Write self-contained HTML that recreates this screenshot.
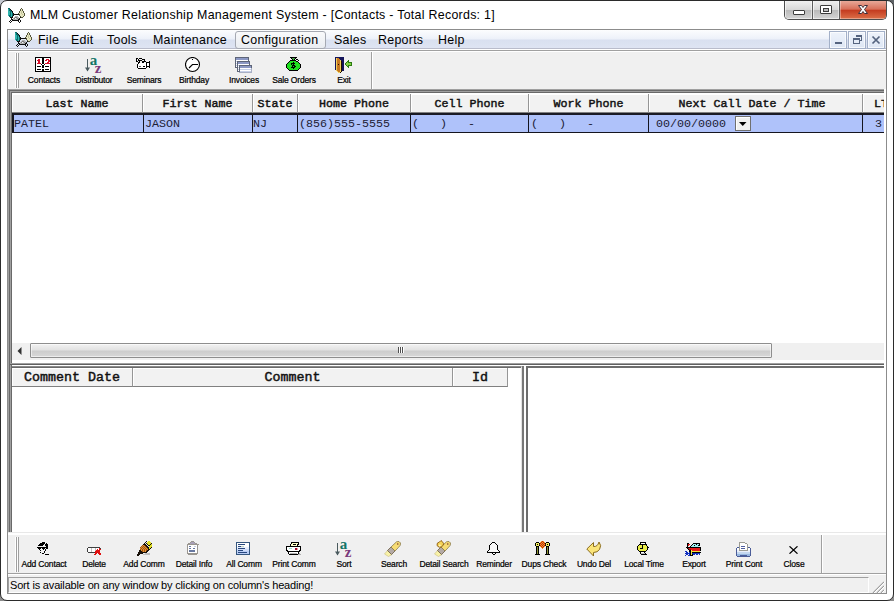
<!DOCTYPE html>
<html>
<head>
<meta charset="utf-8">
<title>MLM Customer Relationship Management System</title>
<style>
*{box-sizing:border-box;margin:0;padding:0}
html,body{width:894px;height:601px;overflow:hidden;background:#fff}
body{position:relative;font-family:"Liberation Sans",sans-serif;color:#000}
.abs{position:absolute}
#win{position:absolute;left:0;top:0;width:894px;height:601px;border:1px solid #2b2b2b;border-radius:7px;background:#fff}
#title{position:absolute;left:30px;top:7px;font-size:12.4px;letter-spacing:.28px;line-height:16px;white-space:nowrap;color:#000}
#client{position:absolute;left:7px;top:29px;width:880px;height:565px;border:1px solid #8c8c8c;background:#f0f0f0}
#menubar{position:absolute;left:8px;top:30px;width:878px;height:20px;background:linear-gradient(#fcfdfe 0%,#edf1f9 47%,#d9e0f0 53%,#dfe5f3 100%);border-bottom:1px solid #fff;box-shadow:inset 0 -1px 0 #b9bccb}
.mi{position:absolute;top:32px;height:17px;font-size:12.4px;letter-spacing:.28px;line-height:17px;white-space:nowrap}
#cfg{position:absolute;left:235px;top:31px;width:91px;height:18px;border:1px solid #a5a9b2;border-radius:3px;background:linear-gradient(#f9fafb,#e9ecf1)}
.mdi{position:absolute;top:31px;width:18px;height:18px;border:1px solid #a3b0c8;background:linear-gradient(#eef3fb,#dde6f4);box-shadow:inset 0 0 0 1px rgba(255,255,255,.7)}
.tb{position:absolute;left:8px;height:39px;background:#f0f0f0;border-right:1px solid #a0a0a0;box-shadow:1px 0 0 #fff}
.grip{position:absolute;width:4px;background:linear-gradient(90deg,#fff 0,#fff 1px,#a0a0a0 1px,#a0a0a0 2px,#fff 2px,#fff 3px,#a0a0a0 3px)}
.tbl{position:absolute;width:80px;text-align:center;font-size:8.5px;line-height:10px;white-space:nowrap;letter-spacing:-.15px;color:#000;-webkit-text-stroke:.22px #000}
.hd{position:absolute;height:19px;background:#f2f2f2;border-right:1px solid #969696;border-bottom:1px solid #808080;box-shadow:inset 1px 1px 0 #fff;font-family:"Liberation Mono",monospace;font-weight:normal;-webkit-text-stroke:.45px #111;font-size:11.667px;line-height:20px;text-align:center;white-space:pre;overflow:hidden;color:#111}
.cell{position:absolute;top:116px;height:17px;font-family:"Liberation Mono",monospace;font-size:11.667px;line-height:17px;white-space:pre;color:#1c2033}
.vs{position:absolute;top:114px;width:1px;height:19px;background:#15151f}
.sunk{position:absolute;background:#fff;border-left:2px solid #6d6d6d;border-top:2px solid #6d6d6d}
#status{position:absolute;left:8px;top:577px;width:861px;height:16px;border-top:1px solid #a0a0a0;border-left:1px solid #a0a0a0;border-bottom:1px solid #fff;border-right:1px solid #fff;font-size:11px;letter-spacing:-.17px;line-height:14px;padding-left:1px;white-space:nowrap;background:#f0f0f0}
</style>
</head>
<body>
<div class="abs" style="left:0;top:0;width:8px;height:8px;background:#c4c8d0"></div><div class="abs" style="right:0;top:0;width:8px;height:8px;background:#606468"></div><div class="abs" style="left:0;bottom:0;width:8px;height:8px;background:#8c8c8c"></div><div class="abs" style="right:0;bottom:0;width:8px;height:8px;background:#8c8c8c"></div>
<div id="win"></div>
<svg class="abs" style="left:8px;top:8px" width="18" height="15" viewBox="0 0 18 15" shape-rendering="crispEdges"><rect x="0" y="0" width="2" height="1" fill="#0a6a6a"/><rect x="13" y="0" width="1" height="1" fill="#55553c"/><rect x="0" y="1" width="1" height="1" fill="#30b4ae"/><rect x="1" y="1" width="1" height="1" fill="#0a6a6a"/><rect x="2" y="1" width="1" height="1" fill="#101010"/><rect x="12" y="1" width="1" height="1" fill="#55553c"/><rect x="13" y="1" width="1" height="1" fill="#e6e6c0"/><rect x="14" y="1" width="1" height="1" fill="#55553c"/><rect x="0" y="2" width="1" height="1" fill="#30b4ae"/><rect x="1" y="2" width="2" height="1" fill="#0a6a6a"/><rect x="3" y="2" width="1" height="1" fill="#101010"/><rect x="12" y="2" width="1" height="1" fill="#55553c"/><rect x="13" y="2" width="1" height="1" fill="#e6e6c0"/><rect x="14" y="2" width="1" height="1" fill="#55553c"/><rect x="0" y="3" width="2" height="1" fill="#30b4ae"/><rect x="2" y="3" width="2" height="1" fill="#0a6a6a"/><rect x="4" y="3" width="1" height="1" fill="#101010"/><rect x="11" y="3" width="1" height="1" fill="#55553c"/><rect x="12" y="3" width="1" height="1" fill="#e6e6c0"/><rect x="13" y="3" width="1" height="1" fill="#c4c49c"/><rect x="14" y="3" width="1" height="1" fill="#e6e6c0"/><rect x="15" y="3" width="1" height="1" fill="#55553c"/><rect x="0" y="4" width="2" height="1" fill="#30b4ae"/><rect x="2" y="4" width="1" height="1" fill="#0a6a6a"/><rect x="3" y="4" width="1" height="1" fill="#30b4ae"/><rect x="4" y="4" width="1" height="1" fill="#101010"/><rect x="11" y="4" width="1" height="1" fill="#55553c"/><rect x="12" y="4" width="1" height="1" fill="#e6e6c0"/><rect x="13" y="4" width="1" height="1" fill="#c4c49c"/><rect x="14" y="4" width="1" height="1" fill="#e6e6c0"/><rect x="15" y="4" width="1" height="1" fill="#55553c"/><rect x="0" y="5" width="2" height="1" fill="#30b4ae"/><rect x="2" y="5" width="1" height="1" fill="#0a6a6a"/><rect x="3" y="5" width="1" height="1" fill="#30b4ae"/><rect x="4" y="5" width="1" height="1" fill="#0a6a6a"/><rect x="5" y="5" width="1" height="1" fill="#101010"/><rect x="10" y="5" width="1" height="1" fill="#55553c"/><rect x="11" y="5" width="2" height="1" fill="#e6e6c0"/><rect x="13" y="5" width="1" height="1" fill="#c4c49c"/><rect x="14" y="5" width="2" height="1" fill="#e6e6c0"/><rect x="16" y="5" width="1" height="1" fill="#55553c"/><rect x="0" y="6" width="2" height="1" fill="#30b4ae"/><rect x="2" y="6" width="1" height="1" fill="#0a6a6a"/><rect x="3" y="6" width="1" height="1" fill="#30b4ae"/><rect x="4" y="6" width="1" height="1" fill="#0a6a6a"/><rect x="5" y="6" width="6" height="1" fill="#101010"/><rect x="11" y="6" width="1" height="1" fill="#55553c"/><rect x="12" y="6" width="2" height="1" fill="#e6e6c0"/><rect x="14" y="6" width="1" height="1" fill="#c4c49c"/><rect x="15" y="6" width="1" height="1" fill="#e6e6c0"/><rect x="16" y="6" width="1" height="1" fill="#55553c"/><rect x="0" y="7" width="1" height="1" fill="#30b4ae"/><rect x="1" y="7" width="2" height="1" fill="#0a6a6a"/><rect x="3" y="7" width="1" height="1" fill="#30b4ae"/><rect x="4" y="7" width="1" height="1" fill="#0a6a6a"/><rect x="5" y="7" width="1" height="1" fill="#101010"/><rect x="11" y="7" width="1" height="1" fill="#55553c"/><rect x="12" y="7" width="4" height="1" fill="#e6e6c0"/><rect x="16" y="7" width="1" height="1" fill="#55553c"/><rect x="1" y="8" width="2" height="1" fill="#0a6a6a"/><rect x="3" y="8" width="1" height="1" fill="#30b4ae"/><rect x="4" y="8" width="1" height="1" fill="#101010"/><rect x="7" y="8" width="3" height="1" fill="#b4b4b4"/><rect x="12" y="8" width="1" height="1" fill="#55553c"/><rect x="13" y="8" width="2" height="1" fill="#e6e6c0"/><rect x="15" y="8" width="1" height="1" fill="#55553c"/><rect x="2" y="9" width="3" height="1" fill="#101010"/><rect x="6" y="9" width="1" height="1" fill="#b4b4b4"/><rect x="7" y="9" width="2" height="1" fill="#7c7c7c"/><rect x="9" y="9" width="2" height="1" fill="#b4b4b4"/><rect x="12" y="9" width="1" height="1" fill="#101010"/><rect x="13" y="9" width="2" height="1" fill="#55553c"/><rect x="3" y="10" width="1" height="1" fill="#101010"/><rect x="5" y="10" width="1" height="1" fill="#b4b4b4"/><rect x="6" y="10" width="1" height="1" fill="#7c7c7c"/><rect x="7" y="10" width="1" height="1" fill="#f4f4f4"/><rect x="8" y="10" width="1" height="1" fill="#b4b4b4"/><rect x="9" y="10" width="1" height="1" fill="#7c7c7c"/><rect x="10" y="10" width="1" height="1" fill="#b4b4b4"/><rect x="11" y="10" width="1" height="1" fill="#101010"/><rect x="3" y="11" width="2" height="1" fill="#101010"/><rect x="5" y="11" width="5" height="1" fill="#b4b4b4"/><rect x="10" y="11" width="2" height="1" fill="#101010"/><rect x="2" y="12" width="1" height="1" fill="#101010"/><rect x="4" y="12" width="7" height="1" fill="#101010"/><rect x="12" y="12" width="1" height="1" fill="#101010"/><rect x="1" y="13" width="1" height="1" fill="#101010"/><rect x="3" y="13" width="1" height="1" fill="#101010"/><rect x="10" y="13" width="1" height="1" fill="#101010"/><rect x="12" y="13" width="1" height="1" fill="#101010"/><rect x="2" y="14" width="1" height="1" fill="#101010"/><rect x="11" y="14" width="1" height="1" fill="#101010"/></svg><div id="title">MLM Customer Relationship Management System - [Contacts - Total Records: 1]</div>
<div class="abs" style="left:784px;top:1px;width:103px;height:19px;border:1px solid #4d4d4d;border-top:none;border-radius:0 0 5px 5px;overflow:hidden;background:#ccc">
<div class="abs" style="left:0;top:0;width:28px;height:18px;background:linear-gradient(#f0f0f0 0%,#d8d8d8 48%,#bababa 52%,#d4d4d4 100%);border-right:1px solid #5d5d5d;box-shadow:inset 1px 0 0 rgba(255,255,255,.6),inset -1px -1px 0 rgba(255,255,255,.5)"></div>
<div class="abs" style="left:28px;top:0;width:27px;height:18px;background:linear-gradient(#f0f0f0 0%,#d8d8d8 48%,#bababa 52%,#d4d4d4 100%);border-right:1px solid #5d5d5d;box-shadow:inset 1px 0 0 rgba(255,255,255,.6),inset -1px -1px 0 rgba(255,255,255,.5)"></div>
<div class="abs" style="left:55px;top:0;width:47px;height:18px;background:linear-gradient(#e8a898 0%,#d8705a 45%,#c43c20 52%,#dc7048 100%);box-shadow:inset 1px 0 0 rgba(255,255,255,.35),inset -1px -1px 0 rgba(255,255,255,.35)"></div>
</div>
<div class="abs" style="left:793px;top:10px;width:12px;height:5px;border:1px solid #3c3c3c;background:#fff;border-radius:1px"></div>
<div class="abs" style="left:820px;top:5px;width:12px;height:9px;border:1px solid #3c3c3c;background:#fff;border-radius:1px"></div>
<div class="abs" style="left:823px;top:8px;width:6px;height:4px;border:1px solid #3c3c3c;background:#bbb"></div>
<svg class="abs" style="left:856px;top:4px" width="14" height="11" viewBox="0 0 14 11"><path d="M2.5 1.5h3l1.5 2 1.5-2h3l-3 4 3 4h-3l-1.5-2-1.5 2h-3l3-4z" fill="#fff" stroke="#40303a" stroke-width="1" stroke-linejoin="round"/></svg>
<div id="client"></div>
<div id="menubar"></div>
<div class="abs" style="left:8px;top:50px;width:878px;height:1px;background:#a0a0a0"></div><div class="abs" style="left:8px;top:51px;width:878px;height:1px;background:#fff"></div>
<svg class="abs" style="left:15px;top:32px" width="18" height="15" viewBox="0 0 18 15" shape-rendering="crispEdges"><rect x="0" y="0" width="2" height="1" fill="#0a6a6a"/><rect x="13" y="0" width="1" height="1" fill="#55553c"/><rect x="0" y="1" width="1" height="1" fill="#30b4ae"/><rect x="1" y="1" width="1" height="1" fill="#0a6a6a"/><rect x="2" y="1" width="1" height="1" fill="#101010"/><rect x="12" y="1" width="1" height="1" fill="#55553c"/><rect x="13" y="1" width="1" height="1" fill="#e6e6c0"/><rect x="14" y="1" width="1" height="1" fill="#55553c"/><rect x="0" y="2" width="1" height="1" fill="#30b4ae"/><rect x="1" y="2" width="2" height="1" fill="#0a6a6a"/><rect x="3" y="2" width="1" height="1" fill="#101010"/><rect x="12" y="2" width="1" height="1" fill="#55553c"/><rect x="13" y="2" width="1" height="1" fill="#e6e6c0"/><rect x="14" y="2" width="1" height="1" fill="#55553c"/><rect x="0" y="3" width="2" height="1" fill="#30b4ae"/><rect x="2" y="3" width="2" height="1" fill="#0a6a6a"/><rect x="4" y="3" width="1" height="1" fill="#101010"/><rect x="11" y="3" width="1" height="1" fill="#55553c"/><rect x="12" y="3" width="1" height="1" fill="#e6e6c0"/><rect x="13" y="3" width="1" height="1" fill="#c4c49c"/><rect x="14" y="3" width="1" height="1" fill="#e6e6c0"/><rect x="15" y="3" width="1" height="1" fill="#55553c"/><rect x="0" y="4" width="2" height="1" fill="#30b4ae"/><rect x="2" y="4" width="1" height="1" fill="#0a6a6a"/><rect x="3" y="4" width="1" height="1" fill="#30b4ae"/><rect x="4" y="4" width="1" height="1" fill="#101010"/><rect x="11" y="4" width="1" height="1" fill="#55553c"/><rect x="12" y="4" width="1" height="1" fill="#e6e6c0"/><rect x="13" y="4" width="1" height="1" fill="#c4c49c"/><rect x="14" y="4" width="1" height="1" fill="#e6e6c0"/><rect x="15" y="4" width="1" height="1" fill="#55553c"/><rect x="0" y="5" width="2" height="1" fill="#30b4ae"/><rect x="2" y="5" width="1" height="1" fill="#0a6a6a"/><rect x="3" y="5" width="1" height="1" fill="#30b4ae"/><rect x="4" y="5" width="1" height="1" fill="#0a6a6a"/><rect x="5" y="5" width="1" height="1" fill="#101010"/><rect x="10" y="5" width="1" height="1" fill="#55553c"/><rect x="11" y="5" width="2" height="1" fill="#e6e6c0"/><rect x="13" y="5" width="1" height="1" fill="#c4c49c"/><rect x="14" y="5" width="2" height="1" fill="#e6e6c0"/><rect x="16" y="5" width="1" height="1" fill="#55553c"/><rect x="0" y="6" width="2" height="1" fill="#30b4ae"/><rect x="2" y="6" width="1" height="1" fill="#0a6a6a"/><rect x="3" y="6" width="1" height="1" fill="#30b4ae"/><rect x="4" y="6" width="1" height="1" fill="#0a6a6a"/><rect x="5" y="6" width="6" height="1" fill="#101010"/><rect x="11" y="6" width="1" height="1" fill="#55553c"/><rect x="12" y="6" width="2" height="1" fill="#e6e6c0"/><rect x="14" y="6" width="1" height="1" fill="#c4c49c"/><rect x="15" y="6" width="1" height="1" fill="#e6e6c0"/><rect x="16" y="6" width="1" height="1" fill="#55553c"/><rect x="0" y="7" width="1" height="1" fill="#30b4ae"/><rect x="1" y="7" width="2" height="1" fill="#0a6a6a"/><rect x="3" y="7" width="1" height="1" fill="#30b4ae"/><rect x="4" y="7" width="1" height="1" fill="#0a6a6a"/><rect x="5" y="7" width="1" height="1" fill="#101010"/><rect x="11" y="7" width="1" height="1" fill="#55553c"/><rect x="12" y="7" width="4" height="1" fill="#e6e6c0"/><rect x="16" y="7" width="1" height="1" fill="#55553c"/><rect x="1" y="8" width="2" height="1" fill="#0a6a6a"/><rect x="3" y="8" width="1" height="1" fill="#30b4ae"/><rect x="4" y="8" width="1" height="1" fill="#101010"/><rect x="7" y="8" width="3" height="1" fill="#b4b4b4"/><rect x="12" y="8" width="1" height="1" fill="#55553c"/><rect x="13" y="8" width="2" height="1" fill="#e6e6c0"/><rect x="15" y="8" width="1" height="1" fill="#55553c"/><rect x="2" y="9" width="3" height="1" fill="#101010"/><rect x="6" y="9" width="1" height="1" fill="#b4b4b4"/><rect x="7" y="9" width="2" height="1" fill="#7c7c7c"/><rect x="9" y="9" width="2" height="1" fill="#b4b4b4"/><rect x="12" y="9" width="1" height="1" fill="#101010"/><rect x="13" y="9" width="2" height="1" fill="#55553c"/><rect x="3" y="10" width="1" height="1" fill="#101010"/><rect x="5" y="10" width="1" height="1" fill="#b4b4b4"/><rect x="6" y="10" width="1" height="1" fill="#7c7c7c"/><rect x="7" y="10" width="1" height="1" fill="#f4f4f4"/><rect x="8" y="10" width="1" height="1" fill="#b4b4b4"/><rect x="9" y="10" width="1" height="1" fill="#7c7c7c"/><rect x="10" y="10" width="1" height="1" fill="#b4b4b4"/><rect x="11" y="10" width="1" height="1" fill="#101010"/><rect x="3" y="11" width="2" height="1" fill="#101010"/><rect x="5" y="11" width="5" height="1" fill="#b4b4b4"/><rect x="10" y="11" width="2" height="1" fill="#101010"/><rect x="2" y="12" width="1" height="1" fill="#101010"/><rect x="4" y="12" width="7" height="1" fill="#101010"/><rect x="12" y="12" width="1" height="1" fill="#101010"/><rect x="1" y="13" width="1" height="1" fill="#101010"/><rect x="3" y="13" width="1" height="1" fill="#101010"/><rect x="10" y="13" width="1" height="1" fill="#101010"/><rect x="12" y="13" width="1" height="1" fill="#101010"/><rect x="2" y="14" width="1" height="1" fill="#101010"/><rect x="11" y="14" width="1" height="1" fill="#101010"/></svg><div id="cfg"></div>
<div class="mi" style="left:38px">File</div>
<div class="mi" style="left:71px">Edit</div>
<div class="mi" style="left:107px">Tools</div>
<div class="mi" style="left:153px">Maintenance</div>
<div class="mi" style="left:241px">Configuration</div>
<div class="mi" style="left:334px">Sales</div>
<div class="mi" style="left:378px">Reports</div>
<div class="mi" style="left:438px">Help</div>
<div class="mdi" style="left:829px"></div><div class="mdi" style="left:848px"></div><div class="mdi" style="left:867px"></div>
<div class="abs" style="left:835px;top:42px;width:7px;height:2px;background:#55647f"></div>
<svg class="abs" style="left:852px;top:34px" width="11" height="11" viewBox="0 0 11 11" shape-rendering="crispEdges"><path d="M3.5 1.5h6v5h-2M3.5 2.5h6" fill="none" stroke="#55647f"/><path d="M1.5 4.5h6v5h-6zM1.5 5.5h6" fill="none" stroke="#55647f"/></svg>
<svg class="abs" style="left:871px;top:35px" width="10" height="10" viewBox="0 0 10 10"><path d="M1.5 1.5l7 7M8.5 1.5l-7 7" stroke="#55647f" stroke-width="1.7" fill="none"/></svg>
<div class="tb" style="top:52px;width:364px;height:37px"></div>
<div class="grip" style="left:15px;top:53px;height:35px"></div>
<div class="tb" style="top:535px;width:814px;height:38px"></div><div class="abs" style="left:8px;top:573px;width:878px;height:1px;background:#a0a0a0"></div><div class="abs" style="left:8px;top:574px;width:878px;height:1px;background:#fff"></div>
<div class="grip" style="left:15px;top:537px;height:35px"></div>
<svg class="abs" style="left:35px;top:57px" width="16" height="15" viewBox="0 0 16 15" shape-rendering="crispEdges"><rect x="0" y="0" width="16" height="1" fill="#000"/><rect x="0" y="1" width="1" height="1" fill="#000"/><rect x="1" y="1" width="6" height="1" fill="#fff"/><rect x="7" y="1" width="2" height="1" fill="#000"/><rect x="9" y="1" width="6" height="1" fill="#fff"/><rect x="15" y="1" width="1" height="1" fill="#000"/><rect x="0" y="2" width="1" height="1" fill="#000"/><rect x="1" y="2" width="2" height="1" fill="#fff"/><rect x="3" y="2" width="2" height="1" fill="#d8102a"/><rect x="5" y="2" width="2" height="1" fill="#fff"/><rect x="7" y="2" width="2" height="1" fill="#000"/><rect x="9" y="2" width="2" height="1" fill="#fff"/><rect x="11" y="2" width="3" height="1" fill="#d8102a"/><rect x="14" y="2" width="1" height="1" fill="#fff"/><rect x="15" y="2" width="1" height="1" fill="#000"/><rect x="0" y="3" width="1" height="1" fill="#000"/><rect x="1" y="3" width="1" height="1" fill="#fff"/><rect x="2" y="3" width="3" height="1" fill="#d8102a"/><rect x="5" y="3" width="2" height="1" fill="#fff"/><rect x="7" y="3" width="2" height="1" fill="#000"/><rect x="9" y="3" width="1" height="1" fill="#fff"/><rect x="10" y="3" width="2" height="1" fill="#d8102a"/><rect x="12" y="3" width="1" height="1" fill="#fff"/><rect x="13" y="3" width="2" height="1" fill="#d8102a"/><rect x="15" y="3" width="1" height="1" fill="#000"/><rect x="0" y="4" width="1" height="1" fill="#000"/><rect x="1" y="4" width="2" height="1" fill="#fff"/><rect x="3" y="4" width="2" height="1" fill="#d8102a"/><rect x="5" y="4" width="2" height="1" fill="#fff"/><rect x="7" y="4" width="2" height="1" fill="#000"/><rect x="9" y="4" width="4" height="1" fill="#fff"/><rect x="13" y="4" width="2" height="1" fill="#d8102a"/><rect x="15" y="4" width="1" height="1" fill="#000"/><rect x="0" y="5" width="1" height="1" fill="#000"/><rect x="1" y="5" width="2" height="1" fill="#fff"/><rect x="3" y="5" width="2" height="1" fill="#d8102a"/><rect x="5" y="5" width="2" height="1" fill="#fff"/><rect x="7" y="5" width="2" height="1" fill="#000"/><rect x="9" y="5" width="3" height="1" fill="#fff"/><rect x="12" y="5" width="2" height="1" fill="#d8102a"/><rect x="14" y="5" width="1" height="1" fill="#fff"/><rect x="15" y="5" width="1" height="1" fill="#000"/><rect x="0" y="6" width="1" height="1" fill="#000"/><rect x="1" y="6" width="1" height="1" fill="#fff"/><rect x="2" y="6" width="4" height="1" fill="#d8102a"/><rect x="6" y="6" width="1" height="1" fill="#fff"/><rect x="7" y="6" width="2" height="1" fill="#000"/><rect x="9" y="6" width="1" height="1" fill="#fff"/><rect x="10" y="6" width="5" height="1" fill="#d8102a"/><rect x="15" y="6" width="1" height="1" fill="#000"/><rect x="0" y="7" width="1" height="1" fill="#000"/><rect x="1" y="7" width="5" height="1" fill="#fff"/><rect x="6" y="7" width="1" height="1" fill="#000"/><rect x="7" y="7" width="2" height="1" fill="#fff"/><rect x="9" y="7" width="1" height="1" fill="#000"/><rect x="10" y="7" width="5" height="1" fill="#fff"/><rect x="15" y="7" width="1" height="1" fill="#000"/><rect x="0" y="8" width="1" height="1" fill="#000"/><rect x="1" y="8" width="6" height="1" fill="#fff"/><rect x="7" y="8" width="2" height="1" fill="#000"/><rect x="9" y="8" width="6" height="1" fill="#fff"/><rect x="15" y="8" width="1" height="1" fill="#000"/><rect x="0" y="9" width="1" height="1" fill="#000"/><rect x="1" y="9" width="1" height="1" fill="#fff"/><rect x="2" y="9" width="4" height="1" fill="#000"/><rect x="6" y="9" width="1" height="1" fill="#fff"/><rect x="7" y="9" width="2" height="1" fill="#000"/><rect x="9" y="9" width="1" height="1" fill="#fff"/><rect x="10" y="9" width="4" height="1" fill="#000"/><rect x="14" y="9" width="1" height="1" fill="#fff"/><rect x="15" y="9" width="1" height="1" fill="#000"/><rect x="0" y="10" width="1" height="1" fill="#000"/><rect x="1" y="10" width="6" height="1" fill="#fff"/><rect x="7" y="10" width="2" height="1" fill="#000"/><rect x="9" y="10" width="6" height="1" fill="#fff"/><rect x="15" y="10" width="1" height="1" fill="#000"/><rect x="0" y="11" width="1" height="1" fill="#000"/><rect x="1" y="11" width="14" height="1" fill="#fff"/><rect x="15" y="11" width="1" height="1" fill="#000"/><rect x="0" y="12" width="1" height="1" fill="#000"/><rect x="1" y="12" width="1" height="1" fill="#fff"/><rect x="2" y="12" width="4" height="1" fill="#000"/><rect x="6" y="12" width="1" height="1" fill="#fff"/><rect x="7" y="12" width="2" height="1" fill="#000"/><rect x="9" y="12" width="1" height="1" fill="#fff"/><rect x="10" y="12" width="4" height="1" fill="#000"/><rect x="14" y="12" width="1" height="1" fill="#fff"/><rect x="15" y="12" width="1" height="1" fill="#000"/><rect x="0" y="13" width="1" height="1" fill="#000"/><rect x="1" y="13" width="6" height="1" fill="#fff"/><rect x="7" y="13" width="2" height="1" fill="#000"/><rect x="9" y="13" width="6" height="1" fill="#fff"/><rect x="15" y="13" width="1" height="1" fill="#000"/><rect x="0" y="14" width="16" height="1" fill="#000"/></svg>
<div class="tbl" style="left:4px;top:75px">Contacts</div>
<svg class="abs" style="left:85px;top:56px" width="18" height="18" viewBox="0 0 18 18"><path d="M2.5 3v12" stroke="#4a5a5e" stroke-width="1" fill="none" shape-rendering="crispEdges"/><path d="M0 11.5l2.5 4l2.5-4z" fill="#4a5a5e"/><text x="4.8" y="8.7" font-family="Liberation Serif,serif" font-weight="bold" font-size="15" fill="#127466">a</text><text x="9.8" y="16.8" font-family="Liberation Serif,serif" font-weight="bold" font-size="15" fill="#7a3a7c">z</text></svg>
<div class="tbl" style="left:54px;top:75px">Distributor</div>
<svg class="abs" style="left:136px;top:58px" width="14" height="11" viewBox="0 0 14 11" shape-rendering="crispEdges"><rect x="0" y="0" width="2" height="1" fill="#000"/><rect x="3" y="0" width="3" height="1" fill="#000"/><rect x="0" y="1" width="1" height="1" fill="#000"/><rect x="2" y="1" width="1" height="1" fill="#000"/><rect x="6" y="1" width="3" height="1" fill="#000"/><rect x="0" y="2" width="1" height="1" fill="#000"/><rect x="2" y="2" width="4" height="1" fill="#000"/><rect x="8" y="2" width="1" height="1" fill="#000"/><rect x="0" y="3" width="2" height="1" fill="#000"/><rect x="3" y="3" width="1" height="1" fill="#000"/><rect x="6" y="3" width="4" height="1" fill="#000"/><rect x="13" y="3" width="1" height="1" fill="#000"/><rect x="2" y="4" width="2" height="1" fill="#000"/><rect x="6" y="4" width="2" height="1" fill="#000"/><rect x="10" y="4" width="4" height="1" fill="#000"/><rect x="2" y="5" width="1" height="1" fill="#000"/><rect x="3" y="5" width="7" height="1" fill="#fff"/><rect x="10" y="5" width="1" height="1" fill="#000"/><rect x="11" y="5" width="2" height="1" fill="#fff"/><rect x="13" y="5" width="1" height="1" fill="#000"/><rect x="1" y="6" width="1" height="1" fill="#000"/><rect x="2" y="6" width="8" height="1" fill="#fff"/><rect x="10" y="6" width="1" height="1" fill="#000"/><rect x="11" y="6" width="2" height="1" fill="#fff"/><rect x="13" y="6" width="1" height="1" fill="#000"/><rect x="1" y="7" width="1" height="1" fill="#000"/><rect x="2" y="7" width="8" height="1" fill="#fff"/><rect x="10" y="7" width="1" height="1" fill="#000"/><rect x="11" y="7" width="2" height="1" fill="#fff"/><rect x="13" y="7" width="1" height="1" fill="#000"/><rect x="1" y="8" width="1" height="1" fill="#000"/><rect x="2" y="8" width="1" height="1" fill="#fff"/><rect x="3" y="8" width="2" height="1" fill="#666"/><rect x="5" y="8" width="2" height="1" fill="#fff"/><rect x="7" y="8" width="2" height="1" fill="#000"/><rect x="9" y="8" width="1" height="1" fill="#fff"/><rect x="10" y="8" width="4" height="1" fill="#000"/><rect x="1" y="9" width="1" height="1" fill="#000"/><rect x="2" y="9" width="8" height="1" fill="#fff"/><rect x="10" y="9" width="1" height="1" fill="#000"/><rect x="13" y="9" width="1" height="1" fill="#000"/><rect x="2" y="10" width="8" height="1" fill="#000"/></svg>
<div class="tbl" style="left:104px;top:75px">Seminars</div>
<svg class="abs" style="left:185px;top:57px" width="16" height="16" viewBox="0 0 16 16"><circle cx="7.5" cy="7.5" r="7" fill="#fff" stroke="#000" stroke-width="1.1"/><path d="M13 7.5H7.5L4 11" fill="none" stroke="#000" stroke-width="1.1"/><rect x="7" y="2" width="1" height="1" fill="#000"/></svg>
<div class="tbl" style="left:154px;top:75px">Birthday</div>
<svg class="abs" style="left:235px;top:57px" width="17" height="16" viewBox="0 0 17 16" shape-rendering="crispEdges"><rect x="0" y="0" width="14" height="1" fill="#5e6578"/><rect x="0" y="1" width="1" height="1" fill="#5e6578"/><rect x="1" y="1" width="12" height="1" fill="#8c98c4"/><rect x="13" y="1" width="1" height="1" fill="#5e6578"/><rect x="0" y="2" width="1" height="1" fill="#5e6578"/><rect x="1" y="2" width="12" height="1" fill="#8c98c4"/><rect x="13" y="2" width="1" height="1" fill="#5e6578"/><rect x="0" y="3" width="1" height="1" fill="#5e6578"/><rect x="1" y="3" width="12" height="1" fill="#fff"/><rect x="13" y="3" width="1" height="1" fill="#5e6578"/><rect x="0" y="4" width="1" height="1" fill="#5e6578"/><rect x="1" y="4" width="1" height="1" fill="#c6d0e8"/><rect x="2" y="4" width="13" height="1" fill="#5e6578"/><rect x="0" y="5" width="1" height="1" fill="#5e6578"/><rect x="1" y="5" width="1" height="1" fill="#fff"/><rect x="2" y="5" width="1" height="1" fill="#5e6578"/><rect x="3" y="5" width="11" height="1" fill="#8c98c4"/><rect x="14" y="5" width="1" height="1" fill="#5e6578"/><rect x="0" y="6" width="1" height="1" fill="#5e6578"/><rect x="1" y="6" width="1" height="1" fill="#c6d0e8"/><rect x="2" y="6" width="1" height="1" fill="#5e6578"/><rect x="3" y="6" width="11" height="1" fill="#8c98c4"/><rect x="14" y="6" width="1" height="1" fill="#5e6578"/><rect x="0" y="7" width="1" height="1" fill="#5e6578"/><rect x="1" y="7" width="1" height="1" fill="#fff"/><rect x="2" y="7" width="1" height="1" fill="#5e6578"/><rect x="3" y="7" width="11" height="1" fill="#fff"/><rect x="14" y="7" width="1" height="1" fill="#5e6578"/><rect x="0" y="8" width="1" height="1" fill="#5e6578"/><rect x="1" y="8" width="1" height="1" fill="#c6d0e8"/><rect x="2" y="8" width="1" height="1" fill="#5e6578"/><rect x="3" y="8" width="1" height="1" fill="#c6d0e8"/><rect x="4" y="8" width="13" height="1" fill="#5e6578"/><rect x="0" y="9" width="1" height="1" fill="#5e6578"/><rect x="1" y="9" width="1" height="1" fill="#fff"/><rect x="2" y="9" width="1" height="1" fill="#5e6578"/><rect x="3" y="9" width="1" height="1" fill="#fff"/><rect x="4" y="9" width="1" height="1" fill="#5e6578"/><rect x="5" y="9" width="11" height="1" fill="#8c98c4"/><rect x="16" y="9" width="1" height="1" fill="#5e6578"/><rect x="0" y="10" width="3" height="1" fill="#5e6578"/><rect x="3" y="10" width="1" height="1" fill="#c6d0e8"/><rect x="4" y="10" width="1" height="1" fill="#5e6578"/><rect x="5" y="10" width="11" height="1" fill="#8c98c4"/><rect x="16" y="10" width="1" height="1" fill="#5e6578"/><rect x="2" y="11" width="1" height="1" fill="#5e6578"/><rect x="3" y="11" width="1" height="1" fill="#fff"/><rect x="4" y="11" width="1" height="1" fill="#5e6578"/><rect x="5" y="11" width="11" height="1" fill="#fff"/><rect x="16" y="11" width="1" height="1" fill="#a8b0c4"/><rect x="2" y="12" width="1" height="1" fill="#5e6578"/><rect x="3" y="12" width="1" height="1" fill="#c6d0e8"/><rect x="4" y="12" width="1" height="1" fill="#5e6578"/><rect x="5" y="12" width="11" height="1" fill="#c6d0e8"/><rect x="16" y="12" width="1" height="1" fill="#a8b0c4"/><rect x="2" y="13" width="1" height="1" fill="#5e6578"/><rect x="3" y="13" width="1" height="1" fill="#fff"/><rect x="4" y="13" width="1" height="1" fill="#5e6578"/><rect x="5" y="13" width="11" height="1" fill="#fff"/><rect x="16" y="13" width="1" height="1" fill="#a8b0c4"/><rect x="2" y="14" width="3" height="1" fill="#5e6578"/><rect x="5" y="14" width="11" height="1" fill="#c6d0e8"/><rect x="16" y="14" width="1" height="1" fill="#a8b0c4"/><rect x="4" y="15" width="13" height="1" fill="#a8b0c4"/></svg>
<div class="tbl" style="left:204px;top:75px">Invoices</div>
<svg class="abs" style="left:286px;top:57px" width="15" height="14" viewBox="0 0 15 14" shape-rendering="crispEdges"><rect x="4" y="0" width="7" height="1" fill="#000"/><rect x="5" y="1" width="1" height="1" fill="#000"/><rect x="6" y="1" width="3" height="1" fill="#4a9a4a"/><rect x="9" y="1" width="1" height="1" fill="#000"/><rect x="6" y="2" width="1" height="1" fill="#000"/><rect x="7" y="2" width="1" height="1" fill="#1fe01f"/><rect x="8" y="2" width="1" height="1" fill="#000"/><rect x="10" y="2" width="2" height="1" fill="#000"/><rect x="4" y="3" width="6" height="1" fill="#000"/><rect x="12" y="3" width="1" height="1" fill="#000"/><rect x="3" y="4" width="1" height="1" fill="#000"/><rect x="4" y="4" width="6" height="1" fill="#1fe01f"/><rect x="10" y="4" width="2" height="1" fill="#000"/><rect x="2" y="5" width="1" height="1" fill="#000"/><rect x="3" y="5" width="4" height="1" fill="#1fe01f"/><rect x="7" y="5" width="1" height="1" fill="#000"/><rect x="8" y="5" width="4" height="1" fill="#1fe01f"/><rect x="12" y="5" width="1" height="1" fill="#000"/><rect x="1" y="6" width="1" height="1" fill="#000"/><rect x="2" y="6" width="3" height="1" fill="#1fe01f"/><rect x="5" y="6" width="4" height="1" fill="#000"/><rect x="9" y="6" width="4" height="1" fill="#1fe01f"/><rect x="13" y="6" width="1" height="1" fill="#000"/><rect x="0" y="7" width="1" height="1" fill="#000"/><rect x="1" y="7" width="4" height="1" fill="#1fe01f"/><rect x="5" y="7" width="1" height="1" fill="#000"/><rect x="6" y="7" width="1" height="1" fill="#1fe01f"/><rect x="7" y="7" width="1" height="1" fill="#000"/><rect x="8" y="7" width="6" height="1" fill="#1fe01f"/><rect x="14" y="7" width="1" height="1" fill="#000"/><rect x="0" y="8" width="1" height="1" fill="#000"/><rect x="1" y="8" width="5" height="1" fill="#1fe01f"/><rect x="6" y="8" width="3" height="1" fill="#000"/><rect x="9" y="8" width="5" height="1" fill="#1fe01f"/><rect x="14" y="8" width="1" height="1" fill="#000"/><rect x="0" y="9" width="1" height="1" fill="#000"/><rect x="1" y="9" width="5" height="1" fill="#1fe01f"/><rect x="6" y="9" width="1" height="1" fill="#000"/><rect x="7" y="9" width="1" height="1" fill="#1fe01f"/><rect x="8" y="9" width="2" height="1" fill="#000"/><rect x="10" y="9" width="4" height="1" fill="#1fe01f"/><rect x="14" y="9" width="1" height="1" fill="#000"/><rect x="0" y="10" width="1" height="1" fill="#000"/><rect x="1" y="10" width="4" height="1" fill="#1fe01f"/><rect x="5" y="10" width="4" height="1" fill="#000"/><rect x="9" y="10" width="5" height="1" fill="#1fe01f"/><rect x="14" y="10" width="1" height="1" fill="#000"/><rect x="1" y="11" width="1" height="1" fill="#000"/><rect x="2" y="11" width="5" height="1" fill="#1fe01f"/><rect x="7" y="11" width="1" height="1" fill="#000"/><rect x="8" y="11" width="5" height="1" fill="#1fe01f"/><rect x="13" y="11" width="1" height="1" fill="#000"/><rect x="2" y="12" width="1" height="1" fill="#000"/><rect x="3" y="12" width="9" height="1" fill="#1fe01f"/><rect x="12" y="12" width="1" height="1" fill="#000"/><rect x="3" y="13" width="9" height="1" fill="#000"/></svg>
<div class="tbl" style="left:254px;top:75px">Sale Orders</div>
<svg class="abs" style="left:335px;top:57px" width="17" height="16" viewBox="0 0 17 16" shape-rendering="crispEdges"><rect x="0" y="0" width="9" height="1" fill="#14145a"/><rect x="0" y="1" width="1" height="1" fill="#14145a"/><rect x="1" y="1" width="1" height="1" fill="#f0d060"/><rect x="2" y="1" width="2" height="1" fill="#c87820"/><rect x="4" y="1" width="5" height="1" fill="#14145a"/><rect x="0" y="2" width="1" height="1" fill="#14145a"/><rect x="1" y="2" width="1" height="1" fill="#f0d060"/><rect x="2" y="2" width="3" height="1" fill="#c87820"/><rect x="5" y="2" width="4" height="1" fill="#14145a"/><rect x="0" y="3" width="1" height="1" fill="#14145a"/><rect x="1" y="3" width="1" height="1" fill="#f0d060"/><rect x="2" y="3" width="3" height="1" fill="#c87820"/><rect x="5" y="3" width="1" height="1" fill="#f0d060"/><rect x="6" y="3" width="3" height="1" fill="#14145a"/><rect x="13" y="3" width="1" height="1" fill="#2a7a10"/><rect x="0" y="4" width="1" height="1" fill="#14145a"/><rect x="1" y="4" width="1" height="1" fill="#f0d060"/><rect x="2" y="4" width="3" height="1" fill="#c87820"/><rect x="5" y="4" width="1" height="1" fill="#f0d060"/><rect x="6" y="4" width="1" height="1" fill="#201000"/><rect x="7" y="4" width="2" height="1" fill="#14145a"/><rect x="12" y="4" width="2" height="1" fill="#2a7a10"/><rect x="0" y="5" width="1" height="1" fill="#14145a"/><rect x="1" y="5" width="1" height="1" fill="#f0d060"/><rect x="2" y="5" width="3" height="1" fill="#c87820"/><rect x="5" y="5" width="1" height="1" fill="#f0d060"/><rect x="6" y="5" width="1" height="1" fill="#201000"/><rect x="7" y="5" width="2" height="1" fill="#14145a"/><rect x="11" y="5" width="1" height="1" fill="#2a7a10"/><rect x="12" y="5" width="1" height="1" fill="#80d040"/><rect x="13" y="5" width="4" height="1" fill="#2a7a10"/><rect x="0" y="6" width="1" height="1" fill="#14145a"/><rect x="1" y="6" width="1" height="1" fill="#f0d060"/><rect x="2" y="6" width="3" height="1" fill="#c87820"/><rect x="5" y="6" width="1" height="1" fill="#f0d060"/><rect x="6" y="6" width="1" height="1" fill="#201000"/><rect x="7" y="6" width="2" height="1" fill="#14145a"/><rect x="10" y="6" width="1" height="1" fill="#2a7a10"/><rect x="11" y="6" width="5" height="1" fill="#80d040"/><rect x="16" y="6" width="1" height="1" fill="#2a7a10"/><rect x="0" y="7" width="1" height="1" fill="#14145a"/><rect x="1" y="7" width="1" height="1" fill="#f0d060"/><rect x="2" y="7" width="1" height="1" fill="#c87820"/><rect x="3" y="7" width="1" height="1" fill="#201000"/><rect x="4" y="7" width="1" height="1" fill="#c87820"/><rect x="5" y="7" width="1" height="1" fill="#f0d060"/><rect x="6" y="7" width="1" height="1" fill="#201000"/><rect x="7" y="7" width="2" height="1" fill="#14145a"/><rect x="10" y="7" width="1" height="1" fill="#2a7a10"/><rect x="11" y="7" width="5" height="1" fill="#80d040"/><rect x="16" y="7" width="1" height="1" fill="#2a7a10"/><rect x="0" y="8" width="1" height="1" fill="#14145a"/><rect x="1" y="8" width="1" height="1" fill="#f0d060"/><rect x="2" y="8" width="3" height="1" fill="#c87820"/><rect x="5" y="8" width="1" height="1" fill="#f0d060"/><rect x="6" y="8" width="1" height="1" fill="#201000"/><rect x="7" y="8" width="2" height="1" fill="#14145a"/><rect x="11" y="8" width="1" height="1" fill="#2a7a10"/><rect x="12" y="8" width="1" height="1" fill="#80d040"/><rect x="13" y="8" width="4" height="1" fill="#2a7a10"/><rect x="0" y="9" width="1" height="1" fill="#14145a"/><rect x="1" y="9" width="1" height="1" fill="#f0d060"/><rect x="2" y="9" width="3" height="1" fill="#c87820"/><rect x="5" y="9" width="1" height="1" fill="#f0d060"/><rect x="6" y="9" width="1" height="1" fill="#201000"/><rect x="7" y="9" width="2" height="1" fill="#14145a"/><rect x="12" y="9" width="2" height="1" fill="#2a7a10"/><rect x="0" y="10" width="1" height="1" fill="#14145a"/><rect x="1" y="10" width="1" height="1" fill="#f0d060"/><rect x="2" y="10" width="3" height="1" fill="#c87820"/><rect x="5" y="10" width="1" height="1" fill="#f0d060"/><rect x="6" y="10" width="1" height="1" fill="#201000"/><rect x="7" y="10" width="2" height="1" fill="#14145a"/><rect x="13" y="10" width="1" height="1" fill="#2a7a10"/><rect x="0" y="11" width="1" height="1" fill="#14145a"/><rect x="1" y="11" width="1" height="1" fill="#f0d060"/><rect x="2" y="11" width="3" height="1" fill="#c87820"/><rect x="5" y="11" width="1" height="1" fill="#f0d060"/><rect x="6" y="11" width="1" height="1" fill="#201000"/><rect x="7" y="11" width="2" height="1" fill="#14145a"/><rect x="0" y="12" width="1" height="1" fill="#14145a"/><rect x="1" y="12" width="1" height="1" fill="#f0d060"/><rect x="2" y="12" width="3" height="1" fill="#c87820"/><rect x="5" y="12" width="1" height="1" fill="#f0d060"/><rect x="6" y="12" width="1" height="1" fill="#201000"/><rect x="7" y="12" width="2" height="1" fill="#14145a"/><rect x="1" y="13" width="1" height="1" fill="#f0d060"/><rect x="2" y="13" width="3" height="1" fill="#c87820"/><rect x="5" y="13" width="1" height="1" fill="#f0d060"/><rect x="6" y="13" width="1" height="1" fill="#201000"/><rect x="7" y="13" width="2" height="1" fill="#14145a"/><rect x="2" y="14" width="1" height="1" fill="#f0d060"/><rect x="3" y="14" width="2" height="1" fill="#c87820"/><rect x="5" y="14" width="1" height="1" fill="#f0d060"/><rect x="6" y="14" width="1" height="1" fill="#201000"/><rect x="3" y="15" width="2" height="1" fill="#f0d060"/><rect x="5" y="15" width="1" height="1" fill="#201000"/></svg>
<div class="tbl" style="left:304px;top:75px">Exit</div>
<svg class="abs" style="left:37px;top:542px" width="14" height="13" viewBox="0 0 14 13" shape-rendering="crispEdges"><rect x="5" y="0" width="3" height="1" fill="#000"/><rect x="3" y="1" width="5" height="1" fill="#000"/><rect x="9" y="1" width="1" height="1" fill="#000"/><rect x="2" y="2" width="5" height="1" fill="#000"/><rect x="8" y="2" width="3" height="1" fill="#000"/><rect x="1" y="3" width="5" height="1" fill="#000"/><rect x="8" y="3" width="3" height="1" fill="#000"/><rect x="9" y="4" width="2" height="1" fill="#000"/><rect x="0" y="5" width="11" height="1" fill="#000"/><rect x="1" y="6" width="3" height="1" fill="#000"/><rect x="5" y="6" width="3" height="1" fill="#000"/><rect x="9" y="6" width="2" height="1" fill="#000"/><rect x="2" y="7" width="1" height="1" fill="#000"/><rect x="6" y="7" width="1" height="1" fill="#000"/><rect x="8" y="7" width="1" height="1" fill="#000"/><rect x="3" y="8" width="1" height="1" fill="#000"/><rect x="8" y="8" width="1" height="1" fill="#000"/><rect x="7" y="9" width="1" height="1" fill="#000"/><rect x="3" y="10" width="1" height="1" fill="#000"/><rect x="7" y="10" width="1" height="1" fill="#000"/><rect x="5" y="11" width="2" height="1" fill="#000"/><rect x="8" y="12" width="4" height="1" fill="#000"/></svg>
<div class="tbl" style="left:4px;top:559px">Add Contact</div>
<svg class="abs" style="left:87px;top:547px" width="14" height="8" viewBox="0 0 14 8" shape-rendering="crispEdges"><rect x="1" y="0" width="12" height="1" fill="#404040"/><rect x="0" y="1" width="1" height="1" fill="#404040"/><rect x="1" y="1" width="3" height="1" fill="#fff"/><rect x="4" y="1" width="1" height="1" fill="#c0c0c0"/><rect x="5" y="1" width="3" height="1" fill="#fff"/><rect x="8" y="1" width="1" height="1" fill="#c0c0c0"/><rect x="9" y="1" width="3" height="1" fill="#fff"/><rect x="12" y="1" width="1" height="1" fill="#e01010"/><rect x="13" y="1" width="1" height="1" fill="#404040"/><rect x="0" y="2" width="1" height="1" fill="#404040"/><rect x="1" y="2" width="3" height="1" fill="#fff"/><rect x="4" y="2" width="1" height="1" fill="#c0c0c0"/><rect x="5" y="2" width="3" height="1" fill="#fff"/><rect x="8" y="2" width="1" height="1" fill="#c0c0c0"/><rect x="9" y="2" width="1" height="1" fill="#fff"/><rect x="10" y="2" width="1" height="1" fill="#e01010"/><rect x="11" y="2" width="1" height="1" fill="#fff"/><rect x="12" y="2" width="2" height="1" fill="#e01010"/><rect x="0" y="3" width="1" height="1" fill="#404040"/><rect x="1" y="3" width="3" height="1" fill="#fff"/><rect x="4" y="3" width="1" height="1" fill="#c0c0c0"/><rect x="5" y="3" width="3" height="1" fill="#fff"/><rect x="8" y="3" width="1" height="1" fill="#c0c0c0"/><rect x="9" y="3" width="4" height="1" fill="#e01010"/><rect x="0" y="4" width="1" height="1" fill="#404040"/><rect x="1" y="4" width="3" height="1" fill="#fff"/><rect x="4" y="4" width="1" height="1" fill="#c0c0c0"/><rect x="5" y="4" width="3" height="1" fill="#fff"/><rect x="8" y="4" width="5" height="1" fill="#e01010"/><rect x="1" y="5" width="7" height="1" fill="#404040"/><rect x="8" y="5" width="5" height="1" fill="#e01010"/><rect x="8" y="6" width="2" height="1" fill="#e01010"/><rect x="11" y="6" width="3" height="1" fill="#e01010"/><rect x="7" y="7" width="2" height="1" fill="#e01010"/><rect x="12" y="7" width="2" height="1" fill="#e01010"/></svg>
<div class="tbl" style="left:54px;top:559px">Delete</div>
<svg class="abs" style="left:137px;top:541px" width="15" height="15" viewBox="0 0 15 15" shape-rendering="crispEdges"><rect x="9" y="0" width="1" height="1" fill="#181008"/><rect x="11" y="0" width="2" height="1" fill="#e0e028"/><rect x="8" y="1" width="1" height="1" fill="#181008"/><rect x="10" y="1" width="4" height="1" fill="#e0e028"/><rect x="7" y="2" width="1" height="1" fill="#181008"/><rect x="9" y="2" width="1" height="1" fill="#181008"/><rect x="10" y="2" width="4" height="1" fill="#e0e028"/><rect x="14" y="2" width="1" height="1" fill="#181008"/><rect x="6" y="3" width="3" height="1" fill="#181008"/><rect x="10" y="3" width="1" height="1" fill="#181008"/><rect x="11" y="3" width="2" height="1" fill="#e0e028"/><rect x="13" y="3" width="1" height="1" fill="#181008"/><rect x="14" y="3" width="1" height="1" fill="#e0e028"/><rect x="5" y="4" width="1" height="1" fill="#a05010"/><rect x="6" y="4" width="1" height="1" fill="#e09030"/><rect x="7" y="4" width="1" height="1" fill="#a05010"/><rect x="8" y="4" width="2" height="1" fill="#181008"/><rect x="11" y="4" width="2" height="1" fill="#181008"/><rect x="13" y="4" width="2" height="1" fill="#e0e028"/><rect x="4" y="5" width="1" height="1" fill="#a05010"/><rect x="5" y="5" width="1" height="1" fill="#e09030"/><rect x="6" y="5" width="1" height="1" fill="#a05010"/><rect x="7" y="5" width="1" height="1" fill="#e09030"/><rect x="8" y="5" width="1" height="1" fill="#a05010"/><rect x="9" y="5" width="2" height="1" fill="#181008"/><rect x="12" y="5" width="3" height="1" fill="#e0e028"/><rect x="3" y="6" width="1" height="1" fill="#a05010"/><rect x="4" y="6" width="1" height="1" fill="#e09030"/><rect x="5" y="6" width="1" height="1" fill="#a05010"/><rect x="6" y="6" width="1" height="1" fill="#e09030"/><rect x="7" y="6" width="1" height="1" fill="#a05010"/><rect x="8" y="6" width="1" height="1" fill="#e09030"/><rect x="9" y="6" width="1" height="1" fill="#a05010"/><rect x="10" y="6" width="2" height="1" fill="#181008"/><rect x="12" y="6" width="2" height="1" fill="#e0e028"/><rect x="14" y="6" width="1" height="1" fill="#181008"/><rect x="3" y="7" width="1" height="1" fill="#e09030"/><rect x="4" y="7" width="1" height="1" fill="#a05010"/><rect x="5" y="7" width="1" height="1" fill="#e09030"/><rect x="6" y="7" width="1" height="1" fill="#a05010"/><rect x="7" y="7" width="1" height="1" fill="#e09030"/><rect x="8" y="7" width="1" height="1" fill="#a05010"/><rect x="9" y="7" width="1" height="1" fill="#e09030"/><rect x="10" y="7" width="1" height="1" fill="#a05010"/><rect x="11" y="7" width="1" height="1" fill="#181008"/><rect x="12" y="7" width="1" height="1" fill="#e0e028"/><rect x="13" y="7" width="1" height="1" fill="#181008"/><rect x="3" y="8" width="1" height="1" fill="#a05010"/><rect x="4" y="8" width="1" height="1" fill="#e09030"/><rect x="5" y="8" width="1" height="1" fill="#a05010"/><rect x="6" y="8" width="1" height="1" fill="#e09030"/><rect x="7" y="8" width="1" height="1" fill="#a05010"/><rect x="8" y="8" width="1" height="1" fill="#e09030"/><rect x="9" y="8" width="1" height="1" fill="#a05010"/><rect x="10" y="8" width="1" height="1" fill="#e09030"/><rect x="11" y="8" width="2" height="1" fill="#181008"/><rect x="2" y="9" width="2" height="1" fill="#181008"/><rect x="4" y="9" width="1" height="1" fill="#e09030"/><rect x="5" y="9" width="1" height="1" fill="#a05010"/><rect x="6" y="9" width="1" height="1" fill="#e09030"/><rect x="7" y="9" width="1" height="1" fill="#a05010"/><rect x="8" y="9" width="1" height="1" fill="#e09030"/><rect x="9" y="9" width="1" height="1" fill="#a05010"/><rect x="10" y="9" width="2" height="1" fill="#181008"/><rect x="2" y="10" width="3" height="1" fill="#181008"/><rect x="5" y="10" width="1" height="1" fill="#a05010"/><rect x="6" y="10" width="1" height="1" fill="#e09030"/><rect x="7" y="10" width="1" height="1" fill="#a05010"/><rect x="8" y="10" width="1" height="1" fill="#e09030"/><rect x="9" y="10" width="2" height="1" fill="#181008"/><rect x="1" y="11" width="9" height="1" fill="#181008"/><rect x="1" y="12" width="5" height="1" fill="#181008"/><rect x="8" y="12" width="5" height="1" fill="#c0c0c0"/><rect x="0" y="13" width="3" height="1" fill="#181008"/><rect x="6" y="13" width="7" height="1" fill="#c0c0c0"/><rect x="0" y="14" width="2" height="1" fill="#181008"/></svg>
<div class="tbl" style="left:104px;top:559px">Add Comm</div>
<svg class="abs" style="left:186px;top:541px" width="13" height="14" viewBox="0 0 13 14" shape-rendering="crispEdges"><rect x="5" y="0" width="3" height="1" fill="#9a9690"/><rect x="4" y="1" width="1" height="1" fill="#9a9690"/><rect x="5" y="1" width="3" height="1" fill="#a8a0b8"/><rect x="8" y="1" width="1" height="1" fill="#9a9690"/><rect x="2" y="2" width="2" height="1" fill="#9a9690"/><rect x="4" y="2" width="5" height="1" fill="#a8a0b8"/><rect x="9" y="2" width="2" height="1" fill="#9a9690"/><rect x="1" y="3" width="12" height="1" fill="#9a9690"/><rect x="1" y="4" width="1" height="1" fill="#9a9690"/><rect x="2" y="4" width="9" height="1" fill="#fff"/><rect x="11" y="4" width="1" height="1" fill="#9a9690"/><rect x="1" y="5" width="1" height="1" fill="#9a9690"/><rect x="2" y="5" width="1" height="1" fill="#fff"/><rect x="3" y="5" width="2" height="1" fill="#6878a0"/><rect x="5" y="5" width="3" height="1" fill="#fff"/><rect x="8" y="5" width="2" height="1" fill="#c8d0e0"/><rect x="10" y="5" width="1" height="1" fill="#fff"/><rect x="11" y="5" width="1" height="1" fill="#9a9690"/><rect x="1" y="6" width="1" height="1" fill="#9a9690"/><rect x="2" y="6" width="9" height="1" fill="#fff"/><rect x="11" y="6" width="1" height="1" fill="#9a9690"/><rect x="1" y="7" width="1" height="1" fill="#9a9690"/><rect x="2" y="7" width="1" height="1" fill="#fff"/><rect x="3" y="7" width="2" height="1" fill="#6878a0"/><rect x="5" y="7" width="2" height="1" fill="#fff"/><rect x="7" y="7" width="2" height="1" fill="#6878a0"/><rect x="9" y="7" width="2" height="1" fill="#fff"/><rect x="11" y="7" width="1" height="1" fill="#9a9690"/><rect x="1" y="8" width="1" height="1" fill="#9a9690"/><rect x="2" y="8" width="9" height="1" fill="#fff"/><rect x="11" y="8" width="1" height="1" fill="#9a9690"/><rect x="1" y="9" width="1" height="1" fill="#9a9690"/><rect x="2" y="9" width="1" height="1" fill="#fff"/><rect x="3" y="9" width="6" height="1" fill="#6878a0"/><rect x="9" y="9" width="2" height="1" fill="#fff"/><rect x="11" y="9" width="1" height="1" fill="#9a9690"/><rect x="1" y="10" width="1" height="1" fill="#9a9690"/><rect x="2" y="10" width="1" height="1" fill="#fff"/><rect x="3" y="10" width="6" height="1" fill="#6878a0"/><rect x="9" y="10" width="2" height="1" fill="#fff"/><rect x="11" y="10" width="1" height="1" fill="#9a9690"/><rect x="1" y="11" width="1" height="1" fill="#9a9690"/><rect x="2" y="11" width="9" height="1" fill="#fff"/><rect x="11" y="11" width="1" height="1" fill="#9a9690"/><rect x="1" y="12" width="11" height="1" fill="#9a9690"/><rect x="2" y="13" width="9" height="1" fill="#9a9690"/></svg>
<div class="tbl" style="left:154px;top:559px">Detail Info</div>
<svg class="abs" style="left:236px;top:542px" width="14" height="13" viewBox="0 0 14 13" shape-rendering="crispEdges"><rect x="0" y="0" width="14" height="1" fill="#34567e"/><rect x="0" y="1" width="1" height="1" fill="#34567e"/><rect x="1" y="1" width="12" height="1" fill="#fdfeff"/><rect x="13" y="1" width="1" height="1" fill="#34567e"/><rect x="0" y="2" width="1" height="1" fill="#34567e"/><rect x="1" y="2" width="1" height="1" fill="#fdfeff"/><rect x="2" y="2" width="7" height="1" fill="#28487e"/><rect x="9" y="2" width="4" height="1" fill="#fdfeff"/><rect x="13" y="2" width="1" height="1" fill="#34567e"/><rect x="0" y="3" width="1" height="1" fill="#34567e"/><rect x="1" y="3" width="12" height="1" fill="#fdfeff"/><rect x="13" y="3" width="1" height="1" fill="#34567e"/><rect x="0" y="4" width="1" height="1" fill="#34567e"/><rect x="1" y="4" width="1" height="1" fill="#fdfeff"/><rect x="2" y="4" width="3" height="1" fill="#28487e"/><rect x="5" y="4" width="3" height="1" fill="#c0d0c0"/><rect x="8" y="4" width="5" height="1" fill="#fdfeff"/><rect x="13" y="4" width="1" height="1" fill="#34567e"/><rect x="0" y="5" width="1" height="1" fill="#34567e"/><rect x="1" y="5" width="12" height="1" fill="#e6eefc"/><rect x="13" y="5" width="1" height="1" fill="#34567e"/><rect x="0" y="6" width="1" height="1" fill="#34567e"/><rect x="1" y="6" width="1" height="1" fill="#e6eefc"/><rect x="2" y="6" width="7" height="1" fill="#28487e"/><rect x="9" y="6" width="4" height="1" fill="#e6eefc"/><rect x="13" y="6" width="1" height="1" fill="#34567e"/><rect x="0" y="7" width="1" height="1" fill="#34567e"/><rect x="1" y="7" width="12" height="1" fill="#cfdcf8"/><rect x="13" y="7" width="1" height="1" fill="#34567e"/><rect x="0" y="8" width="1" height="1" fill="#34567e"/><rect x="1" y="8" width="1" height="1" fill="#cfdcf8"/><rect x="2" y="8" width="5" height="1" fill="#28487e"/><rect x="7" y="8" width="6" height="1" fill="#cfdcf8"/><rect x="13" y="8" width="1" height="1" fill="#34567e"/><rect x="0" y="9" width="1" height="1" fill="#34567e"/><rect x="1" y="9" width="12" height="1" fill="#b8ccf4"/><rect x="13" y="9" width="1" height="1" fill="#34567e"/><rect x="0" y="10" width="1" height="1" fill="#34567e"/><rect x="1" y="10" width="1" height="1" fill="#b8ccf4"/><rect x="2" y="10" width="9" height="1" fill="#28487e"/><rect x="11" y="10" width="2" height="1" fill="#b8ccf4"/><rect x="13" y="10" width="1" height="1" fill="#34567e"/><rect x="0" y="11" width="1" height="1" fill="#34567e"/><rect x="1" y="11" width="12" height="1" fill="#b8ccf4"/><rect x="13" y="11" width="1" height="1" fill="#34567e"/><rect x="0" y="12" width="14" height="1" fill="#34567e"/></svg>
<div class="tbl" style="left:204px;top:559px">All Comm</div>
<svg class="abs" style="left:286px;top:542px" width="15" height="13" viewBox="0 0 15 13" shape-rendering="crispEdges"><rect x="5" y="0" width="8" height="1" fill="#000"/><rect x="5" y="1" width="1" height="1" fill="#000"/><rect x="6" y="1" width="6" height="1" fill="#ffffc8"/><rect x="12" y="1" width="1" height="1" fill="#000"/><rect x="4" y="2" width="1" height="1" fill="#000"/><rect x="5" y="2" width="2" height="1" fill="#ffffc8"/><rect x="7" y="2" width="3" height="1" fill="#000"/><rect x="10" y="2" width="1" height="1" fill="#ffffc8"/><rect x="11" y="2" width="2" height="1" fill="#000"/><rect x="4" y="3" width="1" height="1" fill="#000"/><rect x="5" y="3" width="6" height="1" fill="#ffffc8"/><rect x="11" y="3" width="1" height="1" fill="#000"/><rect x="0" y="4" width="15" height="1" fill="#000"/><rect x="0" y="5" width="1" height="1" fill="#000"/><rect x="1" y="5" width="13" height="1" fill="#fff"/><rect x="14" y="5" width="1" height="1" fill="#000"/><rect x="0" y="6" width="1" height="1" fill="#000"/><rect x="1" y="6" width="2" height="1" fill="#fff"/><rect x="3" y="6" width="3" height="1" fill="#a0e0d0"/><rect x="6" y="6" width="3" height="1" fill="#fff"/><rect x="9" y="6" width="2" height="1" fill="#a01030"/><rect x="11" y="6" width="1" height="1" fill="#f0a0a0"/><rect x="12" y="6" width="2" height="1" fill="#fff"/><rect x="14" y="6" width="1" height="1" fill="#000"/><rect x="0" y="7" width="1" height="1" fill="#000"/><rect x="1" y="7" width="8" height="1" fill="#fff"/><rect x="9" y="7" width="2" height="1" fill="#a01030"/><rect x="11" y="7" width="1" height="1" fill="#f0a0a0"/><rect x="12" y="7" width="2" height="1" fill="#fff"/><rect x="14" y="7" width="1" height="1" fill="#000"/><rect x="0" y="8" width="2" height="1" fill="#000"/><rect x="2" y="8" width="11" height="1" fill="#fff"/><rect x="13" y="8" width="2" height="1" fill="#000"/><rect x="1" y="9" width="13" height="1" fill="#000"/><rect x="2" y="10" width="1" height="1" fill="#000"/><rect x="3" y="10" width="9" height="1" fill="#fff"/><rect x="12" y="10" width="1" height="1" fill="#000"/><rect x="2" y="11" width="1" height="1" fill="#000"/><rect x="3" y="11" width="1" height="1" fill="#fff"/><rect x="4" y="11" width="7" height="1" fill="#b0b0b0"/><rect x="11" y="11" width="1" height="1" fill="#fff"/><rect x="12" y="11" width="1" height="1" fill="#000"/><rect x="13" y="11" width="1" height="1" fill="#b0b0b0"/><rect x="3" y="12" width="9" height="1" fill="#000"/><rect x="12" y="12" width="3" height="1" fill="#b0b0b0"/></svg>
<div class="tbl" style="left:254px;top:559px">Print Comm</div>
<svg class="abs" style="left:335px;top:540px" width="18" height="18" viewBox="0 0 18 18"><path d="M2.5 3v12" stroke="#4a5a5e" stroke-width="1" fill="none" shape-rendering="crispEdges"/><path d="M0 11.5l2.5 4l2.5-4z" fill="#4a5a5e"/><text x="4.8" y="8.7" font-family="Liberation Serif,serif" font-weight="bold" font-size="15" fill="#127466">a</text><text x="9.8" y="16.8" font-family="Liberation Serif,serif" font-weight="bold" font-size="15" fill="#7a3a7c">z</text></svg>
<div class="tbl" style="left:304px;top:559px">Sort</div>
<svg class="abs" style="left:384px;top:540px" width="19" height="17" viewBox="0 0 19 17"><path d="M.5 14L4 10l4 4.5l-3.5 2z" fill="#f8f2a8" stroke="#c0b070" stroke-width=".5"/><path d="M3.5 10.5L7 7l4 4l-3.5 3.5z" fill="#b4aaa6" stroke="#6a5a40" stroke-width=".8"/><path d="M7 7l5.5-5.2q3-1.2 4 1.2q.6 2.2-2.2 4.6L11 11z" fill="#f6dc74" stroke="#8a7a48" stroke-width=".8"/><circle cx="13.8" cy="4" r=".7" fill="#702018"/></svg>
<div class="tbl" style="left:354px;top:559px">Search</div>
<svg class="abs" style="left:434px;top:540px" width="19" height="17" viewBox="0 0 19 17"><path d="M.5 14L4 10l4 4.5l-3.5 2z" fill="#f8f2a8" stroke="#c0b070" stroke-width=".5"/><path d="M3.5 10.5L7 7l4 4l-3.5 3.5z" fill="#b4aaa6" stroke="#6a5a40" stroke-width=".8"/><path d="M7 7l5.5-5.2q3-1.2 4 1.2q.6 2.2-2.2 4.6L11 11z" fill="#f6dc74" stroke="#8a7a48" stroke-width=".8"/><circle cx="13.8" cy="4" r=".7" fill="#702018"/><path d="M3 5.5q-.5-3 2.5-3.5l1.5-1.5l1 .8l1.5 2q.5 2-2 3.5q-2.5 1.5-4.5-1.3z" fill="#f6d458" stroke="#8a5a10" stroke-width=".9"/><circle cx="5.8" cy="5.6" r="1" fill="#fff8c0"/></svg>
<div class="tbl" style="left:404px;top:559px">Detail Search</div>
<svg class="abs" style="left:487px;top:542px" width="14" height="13" viewBox="0 0 14 13" shape-rendering="crispEdges"><rect x="5" y="0" width="3" height="1" fill="#000"/><rect x="4" y="1" width="1" height="1" fill="#000"/><rect x="5" y="1" width="3" height="1" fill="#f8f8f8"/><rect x="8" y="1" width="1" height="1" fill="#000"/><rect x="3" y="2" width="1" height="1" fill="#000"/><rect x="4" y="2" width="5" height="1" fill="#f8f8f8"/><rect x="9" y="2" width="1" height="1" fill="#000"/><rect x="2" y="3" width="1" height="1" fill="#000"/><rect x="3" y="3" width="7" height="1" fill="#f8f8f8"/><rect x="10" y="3" width="1" height="1" fill="#000"/><rect x="2" y="4" width="1" height="1" fill="#000"/><rect x="3" y="4" width="7" height="1" fill="#f8f8f8"/><rect x="10" y="4" width="1" height="1" fill="#000"/><rect x="2" y="5" width="1" height="1" fill="#000"/><rect x="3" y="5" width="7" height="1" fill="#f8f8f8"/><rect x="10" y="5" width="1" height="1" fill="#000"/><rect x="2" y="6" width="1" height="1" fill="#000"/><rect x="3" y="6" width="7" height="1" fill="#f8f8f8"/><rect x="10" y="6" width="1" height="1" fill="#000"/><rect x="2" y="7" width="1" height="1" fill="#000"/><rect x="3" y="7" width="7" height="1" fill="#f8f8f8"/><rect x="10" y="7" width="1" height="1" fill="#000"/><rect x="1" y="8" width="1" height="1" fill="#000"/><rect x="2" y="8" width="9" height="1" fill="#f8f8f8"/><rect x="11" y="8" width="1" height="1" fill="#000"/><rect x="0" y="9" width="1" height="1" fill="#000"/><rect x="1" y="9" width="11" height="1" fill="#f8f8f8"/><rect x="12" y="9" width="1" height="1" fill="#000"/><rect x="0" y="10" width="13" height="1" fill="#000"/><rect x="5" y="11" width="1" height="1" fill="#000"/><rect x="6" y="11" width="2" height="1" fill="#f8f8f8"/><rect x="8" y="11" width="1" height="1" fill="#000"/><rect x="6" y="12" width="2" height="1" fill="#000"/></svg>
<div class="tbl" style="left:454px;top:559px">Reminder</div>
<svg class="abs" style="left:535px;top:541px" width="16" height="14" viewBox="0 0 16 14" shape-rendering="crispEdges"><rect x="6" y="0" width="1" height="1" fill="#f0a020"/><rect x="7" y="0" width="1" height="1" fill="#c02010"/><rect x="8" y="0" width="1" height="1" fill="#f0a020"/><rect x="1" y="1" width="3" height="1" fill="#000"/><rect x="5" y="1" width="1" height="1" fill="#f0a020"/><rect x="6" y="1" width="1" height="1" fill="#c02010"/><rect x="7" y="1" width="1" height="1" fill="#f0a020"/><rect x="8" y="1" width="1" height="1" fill="#c02010"/><rect x="9" y="1" width="1" height="1" fill="#f0a020"/><rect x="11" y="1" width="3" height="1" fill="#000"/><rect x="0" y="2" width="1" height="1" fill="#000"/><rect x="1" y="2" width="3" height="1" fill="#f4f060"/><rect x="4" y="2" width="1" height="1" fill="#000"/><rect x="5" y="2" width="1" height="1" fill="#c02010"/><rect x="6" y="2" width="1" height="1" fill="#f0a020"/><rect x="7" y="2" width="1" height="1" fill="#c02010"/><rect x="8" y="2" width="1" height="1" fill="#f0a020"/><rect x="9" y="2" width="1" height="1" fill="#c02010"/><rect x="10" y="2" width="1" height="1" fill="#000"/><rect x="11" y="2" width="3" height="1" fill="#f4f060"/><rect x="14" y="2" width="1" height="1" fill="#000"/><rect x="0" y="3" width="1" height="1" fill="#000"/><rect x="1" y="3" width="1" height="1" fill="#f4f060"/><rect x="2" y="3" width="1" height="1" fill="#000"/><rect x="3" y="3" width="1" height="1" fill="#f4f060"/><rect x="4" y="3" width="1" height="1" fill="#501010"/><rect x="5" y="3" width="1" height="1" fill="#f0a020"/><rect x="6" y="3" width="1" height="1" fill="#c02010"/><rect x="7" y="3" width="1" height="1" fill="#f0a020"/><rect x="8" y="3" width="1" height="1" fill="#c02010"/><rect x="9" y="3" width="1" height="1" fill="#f0a020"/><rect x="10" y="3" width="1" height="1" fill="#501010"/><rect x="11" y="3" width="1" height="1" fill="#f4f060"/><rect x="12" y="3" width="1" height="1" fill="#000"/><rect x="13" y="3" width="1" height="1" fill="#f4f060"/><rect x="14" y="3" width="1" height="1" fill="#000"/><rect x="0" y="4" width="1" height="1" fill="#000"/><rect x="1" y="4" width="3" height="1" fill="#f4f060"/><rect x="4" y="4" width="1" height="1" fill="#000"/><rect x="5" y="4" width="1" height="1" fill="#c02010"/><rect x="6" y="4" width="1" height="1" fill="#f0a020"/><rect x="7" y="4" width="1" height="1" fill="#c02010"/><rect x="8" y="4" width="1" height="1" fill="#f0a020"/><rect x="9" y="4" width="1" height="1" fill="#c02010"/><rect x="10" y="4" width="1" height="1" fill="#000"/><rect x="11" y="4" width="3" height="1" fill="#f4f060"/><rect x="14" y="4" width="1" height="1" fill="#000"/><rect x="1" y="5" width="3" height="1" fill="#000"/><rect x="5" y="5" width="1" height="1" fill="#f0a020"/><rect x="6" y="5" width="1" height="1" fill="#c02010"/><rect x="7" y="5" width="1" height="1" fill="#f0a020"/><rect x="8" y="5" width="1" height="1" fill="#c02010"/><rect x="9" y="5" width="1" height="1" fill="#f0a020"/><rect x="11" y="5" width="3" height="1" fill="#000"/><rect x="1" y="6" width="1" height="1" fill="#000"/><rect x="2" y="6" width="1" height="1" fill="#8a9030"/><rect x="3" y="6" width="1" height="1" fill="#000"/><rect x="6" y="6" width="1" height="1" fill="#f0a020"/><rect x="7" y="6" width="1" height="1" fill="#c02010"/><rect x="8" y="6" width="1" height="1" fill="#f0a020"/><rect x="11" y="6" width="1" height="1" fill="#000"/><rect x="12" y="6" width="1" height="1" fill="#8a9030"/><rect x="13" y="6" width="1" height="1" fill="#000"/><rect x="1" y="7" width="1" height="1" fill="#000"/><rect x="2" y="7" width="1" height="1" fill="#8a9030"/><rect x="3" y="7" width="1" height="1" fill="#000"/><rect x="7" y="7" width="1" height="1" fill="#f0a020"/><rect x="11" y="7" width="1" height="1" fill="#000"/><rect x="12" y="7" width="1" height="1" fill="#8a9030"/><rect x="13" y="7" width="1" height="1" fill="#000"/><rect x="1" y="8" width="1" height="1" fill="#000"/><rect x="2" y="8" width="1" height="1" fill="#8a9030"/><rect x="3" y="8" width="1" height="1" fill="#000"/><rect x="11" y="8" width="1" height="1" fill="#000"/><rect x="12" y="8" width="1" height="1" fill="#8a9030"/><rect x="13" y="8" width="1" height="1" fill="#000"/><rect x="1" y="9" width="1" height="1" fill="#000"/><rect x="2" y="9" width="1" height="1" fill="#8a9030"/><rect x="3" y="9" width="1" height="1" fill="#000"/><rect x="11" y="9" width="1" height="1" fill="#000"/><rect x="12" y="9" width="1" height="1" fill="#8a9030"/><rect x="13" y="9" width="1" height="1" fill="#000"/><rect x="1" y="10" width="1" height="1" fill="#000"/><rect x="2" y="10" width="1" height="1" fill="#8a9030"/><rect x="3" y="10" width="1" height="1" fill="#000"/><rect x="11" y="10" width="1" height="1" fill="#000"/><rect x="12" y="10" width="1" height="1" fill="#8a9030"/><rect x="13" y="10" width="1" height="1" fill="#000"/><rect x="1" y="11" width="1" height="1" fill="#000"/><rect x="2" y="11" width="1" height="1" fill="#8a9030"/><rect x="3" y="11" width="1" height="1" fill="#000"/><rect x="11" y="11" width="1" height="1" fill="#000"/><rect x="12" y="11" width="1" height="1" fill="#8a9030"/><rect x="13" y="11" width="1" height="1" fill="#000"/><rect x="1" y="12" width="1" height="1" fill="#000"/><rect x="2" y="12" width="1" height="1" fill="#8a9030"/><rect x="3" y="12" width="1" height="1" fill="#000"/><rect x="11" y="12" width="1" height="1" fill="#000"/><rect x="12" y="12" width="1" height="1" fill="#8a9030"/><rect x="13" y="12" width="1" height="1" fill="#000"/><rect x="0" y="13" width="5" height="1" fill="#000"/><rect x="10" y="13" width="5" height="1" fill="#000"/></svg>
<div class="tbl" style="left:504px;top:559px">Dups Check</div>
<svg class="abs" style="left:586px;top:541px" width="17" height="16" viewBox="0 0 17 16"><path d="M.8 8L7.5 1.5v4q4 .5 5.5-4.5q3 3.5 .5 7.5q-2 3-6 3v3.5z" fill="#fae478" stroke="#8a6c20" stroke-width="1" stroke-linejoin="round"/></svg>
<div class="tbl" style="left:554px;top:559px">Undo Del</div>
<svg class="abs" style="left:637px;top:542px" width="12" height="13" viewBox="0 0 12 13" shape-rendering="crispEdges"><rect x="3" y="0" width="6" height="1" fill="#000"/><rect x="3" y="1" width="1" height="1" fill="#000"/><rect x="4" y="1" width="4" height="1" fill="#fff"/><rect x="8" y="1" width="1" height="1" fill="#000"/><rect x="2" y="2" width="8" height="1" fill="#000"/><rect x="1" y="3" width="1" height="1" fill="#000"/><rect x="2" y="3" width="3" height="1" fill="#e8ec48"/><rect x="5" y="3" width="1" height="1" fill="#000"/><rect x="6" y="3" width="3" height="1" fill="#e8ec48"/><rect x="9" y="3" width="1" height="1" fill="#000"/><rect x="0" y="4" width="1" height="1" fill="#000"/><rect x="1" y="4" width="4" height="1" fill="#e8ec48"/><rect x="5" y="4" width="1" height="1" fill="#000"/><rect x="6" y="4" width="4" height="1" fill="#e8ec48"/><rect x="10" y="4" width="1" height="1" fill="#000"/><rect x="0" y="5" width="1" height="1" fill="#000"/><rect x="1" y="5" width="4" height="1" fill="#e8ec48"/><rect x="5" y="5" width="1" height="1" fill="#000"/><rect x="6" y="5" width="4" height="1" fill="#e8ec48"/><rect x="10" y="5" width="2" height="1" fill="#000"/><rect x="0" y="6" width="1" height="1" fill="#000"/><rect x="1" y="6" width="2" height="1" fill="#e8ec48"/><rect x="3" y="6" width="3" height="1" fill="#000"/><rect x="6" y="6" width="4" height="1" fill="#e8ec48"/><rect x="10" y="6" width="1" height="1" fill="#000"/><rect x="0" y="7" width="1" height="1" fill="#000"/><rect x="1" y="7" width="9" height="1" fill="#e8ec48"/><rect x="10" y="7" width="1" height="1" fill="#000"/><rect x="1" y="8" width="1" height="1" fill="#000"/><rect x="2" y="8" width="7" height="1" fill="#e8ec48"/><rect x="9" y="8" width="1" height="1" fill="#000"/><rect x="2" y="9" width="7" height="1" fill="#000"/><rect x="3" y="10" width="1" height="1" fill="#000"/><rect x="4" y="10" width="3" height="1" fill="#fff"/><rect x="7" y="10" width="1" height="1" fill="#000"/><rect x="3" y="11" width="1" height="1" fill="#000"/><rect x="4" y="11" width="4" height="1" fill="#c0c0c0"/><rect x="8" y="11" width="1" height="1" fill="#000"/><rect x="4" y="12" width="6" height="1" fill="#000"/></svg>
<div class="tbl" style="left:604px;top:559px">Local Time</div>
<svg class="abs" style="left:685px;top:543px" width="17" height="13" viewBox="0 0 17 13" shape-rendering="crispEdges"><rect x="2" y="0" width="2" height="1" fill="#000"/><rect x="8" y="0" width="7" height="1" fill="#000"/><rect x="2" y="1" width="1" height="1" fill="#000"/><rect x="3" y="1" width="2" height="1" fill="#e81818"/><rect x="7" y="1" width="1" height="1" fill="#000"/><rect x="8" y="1" width="3" height="1" fill="#a0f0f0"/><rect x="11" y="1" width="1" height="1" fill="#000"/><rect x="12" y="1" width="2" height="1" fill="#a0f0f0"/><rect x="14" y="1" width="1" height="1" fill="#000"/><rect x="2" y="2" width="1" height="1" fill="#000"/><rect x="3" y="2" width="1" height="1" fill="#e81818"/><rect x="6" y="2" width="1" height="1" fill="#000"/><rect x="7" y="2" width="2" height="1" fill="#a0f0f0"/><rect x="9" y="2" width="1" height="1" fill="#000"/><rect x="10" y="2" width="3" height="1" fill="#a0f0f0"/><rect x="13" y="2" width="2" height="1" fill="#000"/><rect x="2" y="3" width="1" height="1" fill="#000"/><rect x="5" y="3" width="1" height="1" fill="#000"/><rect x="6" y="3" width="8" height="1" fill="#a0f0f0"/><rect x="1" y="4" width="15" height="1" fill="#000"/><rect x="2" y="5" width="1" height="1" fill="#000"/><rect x="3" y="5" width="1" height="1" fill="#901010"/><rect x="4" y="5" width="11" height="1" fill="#e81818"/><rect x="15" y="5" width="1" height="1" fill="#000"/><rect x="3" y="6" width="1" height="1" fill="#000"/><rect x="4" y="6" width="2" height="1" fill="#901010"/><rect x="6" y="6" width="9" height="1" fill="#e81818"/><rect x="15" y="6" width="1" height="1" fill="#000"/><rect x="4" y="7" width="2" height="1" fill="#000"/><rect x="6" y="7" width="1" height="1" fill="#f0e040"/><rect x="7" y="7" width="8" height="1" fill="#e81818"/><rect x="15" y="7" width="1" height="1" fill="#000"/><rect x="0" y="8" width="2" height="1" fill="#1030c0"/><rect x="4" y="8" width="2" height="1" fill="#000"/><rect x="6" y="8" width="9" height="1" fill="#f0e040"/><rect x="1" y="9" width="2" height="1" fill="#1030c0"/><rect x="4" y="9" width="1" height="1" fill="#1030c0"/><rect x="5" y="9" width="1" height="1" fill="#000"/><rect x="6" y="9" width="1" height="1" fill="#f0e040"/><rect x="7" y="9" width="9" height="1" fill="#000"/><rect x="0" y="10" width="5" height="1" fill="#1030c0"/><rect x="5" y="10" width="1" height="1" fill="#000"/><rect x="6" y="10" width="1" height="1" fill="#f0e040"/><rect x="7" y="10" width="8" height="1" fill="#1030c0"/><rect x="1" y="11" width="2" height="1" fill="#1030c0"/><rect x="4" y="11" width="1" height="1" fill="#1030c0"/><rect x="5" y="11" width="1" height="1" fill="#000"/><rect x="6" y="11" width="1" height="1" fill="#f0e040"/><rect x="7" y="11" width="1" height="1" fill="#000"/><rect x="8" y="11" width="2" height="1" fill="#1030c0"/><rect x="11" y="11" width="2" height="1" fill="#1030c0"/><rect x="14" y="11" width="1" height="1" fill="#1030c0"/><rect x="0" y="12" width="1" height="1" fill="#1030c0"/><rect x="3" y="12" width="2" height="1" fill="#1030c0"/><rect x="5" y="12" width="3" height="1" fill="#000"/></svg>
<div class="tbl" style="left:654px;top:559px">Export</div>
<svg class="abs" style="left:736px;top:542px" width="16" height="15" viewBox="0 0 16 15" shape-rendering="crispEdges"><rect x="3" y="0" width="6" height="1" fill="#9c9c94"/><rect x="3" y="1" width="1" height="1" fill="#9c9c94"/><rect x="4" y="1" width="5" height="1" fill="#fff"/><rect x="9" y="1" width="2" height="1" fill="#9c9c94"/><rect x="3" y="2" width="1" height="1" fill="#9c9c94"/><rect x="4" y="2" width="7" height="1" fill="#fff"/><rect x="11" y="2" width="1" height="1" fill="#9c9c94"/><rect x="3" y="3" width="1" height="1" fill="#9c9c94"/><rect x="4" y="3" width="7" height="1" fill="#fff"/><rect x="11" y="3" width="1" height="1" fill="#9c9c94"/><rect x="3" y="4" width="1" height="1" fill="#9c9c94"/><rect x="4" y="4" width="1" height="1" fill="#fff"/><rect x="5" y="4" width="4" height="1" fill="#5060a0"/><rect x="9" y="4" width="2" height="1" fill="#fff"/><rect x="11" y="4" width="1" height="1" fill="#9c9c94"/><rect x="1" y="5" width="2" height="1" fill="#4a5c98"/><rect x="3" y="5" width="1" height="1" fill="#9c9c94"/><rect x="4" y="5" width="7" height="1" fill="#fff"/><rect x="11" y="5" width="1" height="1" fill="#9c9c94"/><rect x="12" y="5" width="2" height="1" fill="#4a5c98"/><rect x="0" y="6" width="1" height="1" fill="#4a5c98"/><rect x="1" y="6" width="2" height="1" fill="#fff"/><rect x="3" y="6" width="1" height="1" fill="#9c9c94"/><rect x="4" y="6" width="1" height="1" fill="#fff"/><rect x="5" y="6" width="4" height="1" fill="#5060a0"/><rect x="9" y="6" width="2" height="1" fill="#fff"/><rect x="11" y="6" width="1" height="1" fill="#9c9c94"/><rect x="12" y="6" width="2" height="1" fill="#fff"/><rect x="14" y="6" width="1" height="1" fill="#4a5c98"/><rect x="0" y="7" width="1" height="1" fill="#4a5c98"/><rect x="1" y="7" width="2" height="1" fill="#fff"/><rect x="3" y="7" width="1" height="1" fill="#9c9c94"/><rect x="4" y="7" width="7" height="1" fill="#fff"/><rect x="11" y="7" width="1" height="1" fill="#9c9c94"/><rect x="12" y="7" width="2" height="1" fill="#fff"/><rect x="14" y="7" width="1" height="1" fill="#4a5c98"/><rect x="0" y="8" width="1" height="1" fill="#4a5c98"/><rect x="1" y="8" width="2" height="1" fill="#eaf0fa"/><rect x="3" y="8" width="9" height="1" fill="#9c9c94"/><rect x="12" y="8" width="2" height="1" fill="#eaf0fa"/><rect x="14" y="8" width="1" height="1" fill="#4a5c98"/><rect x="0" y="9" width="1" height="1" fill="#4a5c98"/><rect x="1" y="9" width="13" height="1" fill="#eaf0fa"/><rect x="14" y="9" width="1" height="1" fill="#4a5c98"/><rect x="0" y="10" width="1" height="1" fill="#4a5c98"/><rect x="1" y="10" width="13" height="1" fill="#c4d8f0"/><rect x="14" y="10" width="1" height="1" fill="#4a5c98"/><rect x="0" y="11" width="1" height="1" fill="#4a5c98"/><rect x="1" y="11" width="13" height="1" fill="#c4d8f0"/><rect x="14" y="11" width="1" height="1" fill="#4a5c98"/><rect x="0" y="12" width="1" height="1" fill="#4a5c98"/><rect x="1" y="12" width="13" height="1" fill="#98b8e0"/><rect x="14" y="12" width="1" height="1" fill="#4a5c98"/><rect x="0" y="13" width="1" height="1" fill="#4a5c98"/><rect x="1" y="13" width="3" height="1" fill="#98b8e0"/><rect x="4" y="13" width="7" height="1" fill="#4a5c98"/><rect x="11" y="13" width="3" height="1" fill="#98b8e0"/><rect x="14" y="13" width="1" height="1" fill="#4a5c98"/><rect x="1" y="14" width="13" height="1" fill="#4a5c98"/></svg>
<div class="tbl" style="left:704px;top:559px">Print Cont</div>
<svg class="abs" style="left:789px;top:546px" width="9" height="8" viewBox="0 0 9 8"><path d="M.5 .3l8 7.4M8.5 .3l-8 7.4" stroke="#000" stroke-width="1.2" fill="none"/></svg>
<div class="tbl" style="left:754px;top:559px">Close</div>
<div class="abs" style="left:12px;top:93px;width:872px;height:270px;background:#fff"></div>
<div class="abs" style="left:8px;top:89px;width:876px;height:1px;background:#a0a0a0"></div><div class="abs" style="left:8px;top:89px;width:1px;height:443px;background:#a0a0a0"></div><div class="abs" style="left:9px;top:90px;width:875px;height:1px;background:#696969"></div><div class="abs" style="left:9px;top:90px;width:1px;height:442px;background:#696969"></div><div class="abs" style="left:10px;top:91px;width:874px;height:1px;background:#a0a0a0"></div><div class="abs" style="left:10px;top:91px;width:1px;height:441px;background:#a0a0a0"></div><div class="abs" style="left:11px;top:92px;width:873px;height:1px;background:#696969"></div><div class="abs" style="left:11px;top:92px;width:1px;height:440px;background:#696969"></div>
<div class="hd" style="left:12px;top:94px;width:131px">Last Name</div>
<div class="hd" style="left:143px;top:94px;width:110px">First Name</div>
<div class="hd" style="left:253px;top:94px;width:45px">State</div>
<div class="hd" style="left:298px;top:94px;width:113px">Home Phone</div>
<div class="hd" style="left:411px;top:94px;width:118px">Cell Phone</div>
<div class="hd" style="left:529px;top:94px;width:120px">Work Phone</div>
<div class="hd" style="left:649px;top:94px;width:214px">Next Call Date / Time </div>
<div class="hd" style="left:863px;top:94px;width:21px;border-right:none;text-align:left;padding-left:11px">LT</div>
<div class="abs" style="left:12px;top:113px;width:872px;height:20px;background:#afc2fa;border-top:2px solid #1a1a24;border-bottom:1px solid #15151f;border-left:2px solid #15151f"></div>
<div class="vs" style="left:143px"></div><div class="vs" style="left:252px"></div><div class="vs" style="left:297px"></div><div class="vs" style="left:410px"></div><div class="vs" style="left:528px"></div><div class="vs" style="left:648px"></div><div class="vs" style="left:862px"></div>
<div class="cell" style="left:14px">PATEL</div>
<div class="cell" style="left:145px">JASON</div>
<div class="cell" style="left:253px">NJ</div>
<div class="cell" style="left:299px">(856)555-5555</div>
<div class="cell" style="left:412px">(   )   -</div>
<div class="cell" style="left:531px">(   )   -</div>
<div class="cell" style="left:656px">00/00/0000</div>
<div class="cell" style="left:875px">3</div>
<div class="abs" style="left:735px;top:116px;width:16px;height:15px;background:#f0f0f0;border:1px solid #707070;box-shadow:inset 1px 1px 0 #fff"></div><svg class="abs" style="left:739px;top:122px" width="8" height="4" viewBox="0 0 8 4"><path d="M0 0h7.5L3.75 4z" fill="#000"/></svg>
<div class="abs" style="left:12px;top:343px;width:872px;height:17px;background:#f0f0f0"></div>
<svg class="abs" style="left:17px;top:347px" width="5" height="8" viewBox="0 0 5 8"><path d="M4.5 0v8L.5 4z" fill="#303030"/></svg>
<div class="abs" style="left:30px;top:343px;width:742px;height:15px;border:1px solid #8e8e8e;border-radius:1px;background:linear-gradient(#f2f2f2 0%,#e2e2e2 45%,#cdcdcd 55%,#d8d8d8 100%);box-shadow:inset 0 0 0 1px rgba(255,255,255,.55)"></div>
<div class="abs" style="left:398px;top:347px;width:1px;height:6px;background:#505050;box-shadow:1px 0 0 #fff,2px 0 0 #505050,3px 0 0 #fff,4px 0 0 #505050,5px 0 0 #fff"></div>
<div class="abs" style="left:12px;top:360px;width:872px;height:3px;background:#fff"></div>
<div class="abs" style="left:10px;top:363px;width:874px;height:1px;background:#a0a0a0"></div>
<div class="abs" style="left:10px;top:364px;width:874px;height:1px;background:#606060"></div>
<div class="abs" style="left:12px;top:365px;width:872px;height:1px;background:#fff"></div><div class="abs" style="left:884px;top:89px;width:2px;height:445px;background:#fff"></div>
<div class="abs" style="left:12px;top:366px;width:510px;height:166px;background:#fff;border-top:1px solid #8a8a8a;box-shadow:inset 0 1px 0 #696969;border-right:1px solid #e3e3e3"></div>
<div class="hd" style="left:12px;top:368px;width:121px;font-size:13.333px">Comment Date</div>
<div class="hd" style="left:133px;top:368px;width:320px;font-size:13.333px">Comment</div>
<div class="hd" style="left:453px;top:368px;width:55px;font-size:13.333px">Id</div>
<div class="abs" style="left:522px;top:366px;width:2px;height:166px;background:#787878"></div><div class="abs" style="left:524px;top:366px;width:2px;height:166px;background:#fff"></div>
<div class="sunk" style="left:526px;top:366px;width:358px;height:166px"></div>
<div class="abs" style="left:8px;top:532px;width:878px;height:1px;background:#e8e8e8"></div><div class="abs" style="left:8px;top:533px;width:878px;height:2px;background:#fff"></div>
<div id="status">Sort is available on any window by clicking on column's heading!</div>
<svg class="abs" style="left:872px;top:581px" width="13" height="13" viewBox="0 0 13 13"><path d="M12 1L1 12M12 5L5 12M12 9L9 12" stroke="#a0a0a0" stroke-width="1.2"/><path d="M13 1L2 12M13 5L6 12M13 9L10 12" stroke="#fff" stroke-width="1"/></svg>
</body>
</html>
